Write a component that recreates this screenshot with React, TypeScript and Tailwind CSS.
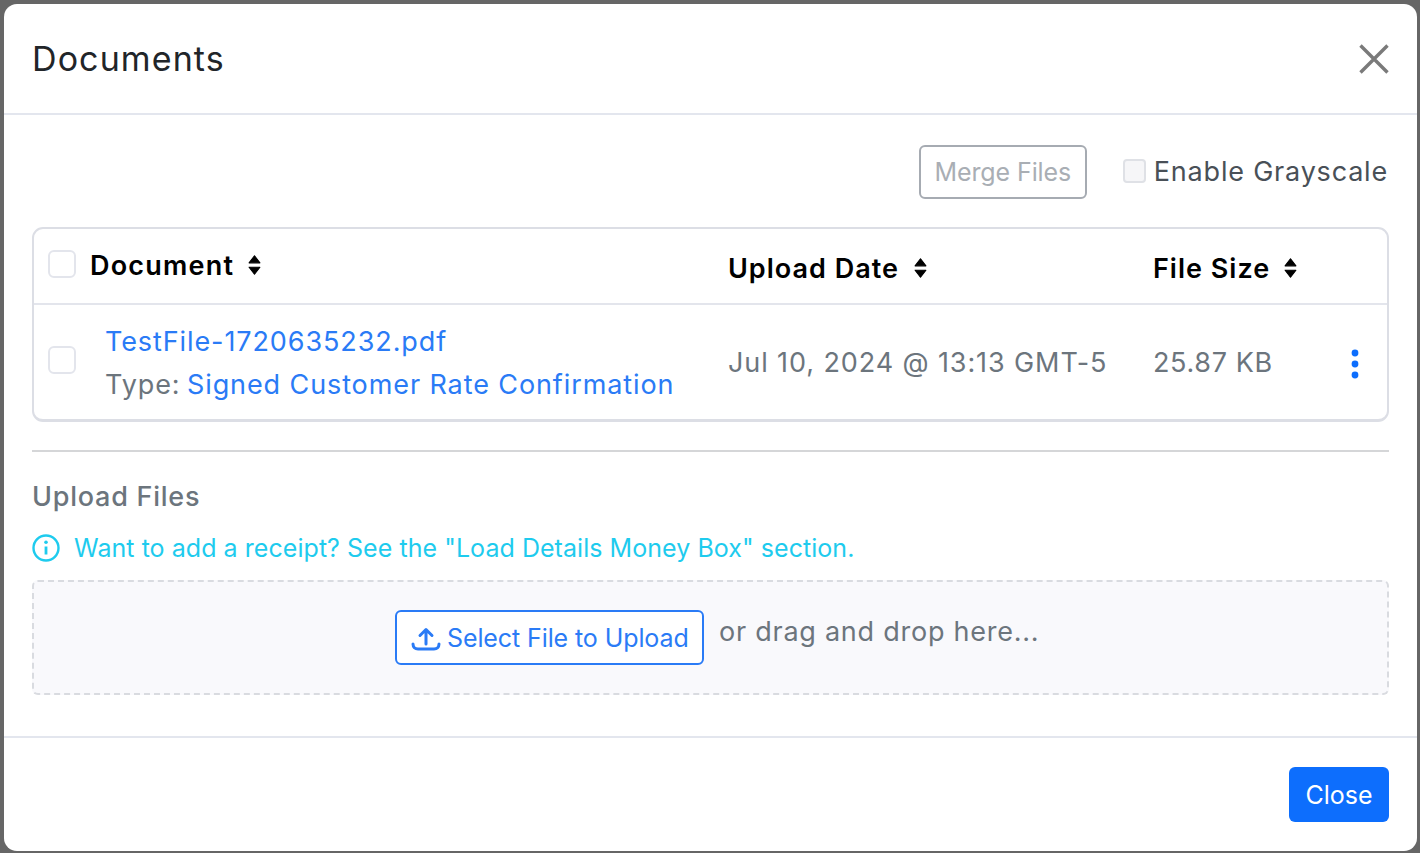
const SortIcon = () => (
  <svg viewBox="0 0 12 20" className="w-[13px] h-[22px] text-black">
    <path d="M6 1.5 11 8H1z" fill="currentColor" strokeLinejoin="round" stroke="currentColor" strokeWidth="1" />
    <path d="M6 18.5 1 12h10z" fill="currentColor" strokeLinejoin="round" stroke="currentColor" strokeWidth="1" />
  </svg>
)

const Checkbox = ({ className = '' }: { className?: string }) => (
  <span className={`block w-[28px] h-[28px] rounded-[6px] border-2 border-[#e3e5ec] bg-white shrink-0 ${className}`} />
)

export default function App() {
  return (
    <div
      className="w-[1420px] h-[853px] bg-[#666666] pt-[4px] pl-[4px] overflow-hidden"
      style={{ fontFamily: 'Inter, "Noto Sans", sans-serif' }}
    >
      <div className="w-[1413px] h-[847px] bg-white rounded-[13px] flex flex-col">
        <div className="h-[111px] shrink-0 border-b-2 border-[#e3e6ee] pl-[28px] pr-[28px] flex items-center justify-between">
          <h1 className="text-[34px] leading-none tracking-[1.1px] text-[#212529] mt-[0px]">Documents</h1>
          <svg viewBox="0 0 30 30" className="w-[30px] h-[30px] text-[#7a7a7a]">
            <path d="M1.5 1.5 28.5 28.5M28.5 1.5 1.5 28.5" stroke="currentColor" strokeWidth="3.4" fill="none" />
          </svg>
        </div>

        <div className="h-[623px] shrink-0 border-b-2 border-[#e3e6ee] pl-[28px] pr-[28px] pt-[30px]">
          <div className="flex items-center justify-end h-[54px] pr-[1px]">
            <button className="h-[54px] w-[168px] border-2 border-[#a6abb2] rounded-[6px] text-[25px] text-[#a9aeb4] bg-white tracking-[-0.1px] pt-[1px]">
              Merge Files
            </button>
            <span className="block w-[23px] h-[24px] ml-[36px] -mt-[3px] rounded-[4px] border-2 border-[#dfe1e6] bg-[#f6f6f8]" />
            <span className="ml-[8px] text-[27px] leading-none tracking-[0.8px] text-[#495057] -mt-[1px]">Enable Grayscale</span>
          </div>

          <div className="mt-[28px] h-[195px] rounded-[11px] border-2 border-[#dcdee5] border-b-[3px] flex flex-col">
            <div className="h-[76px] shrink-0 border-b-2 border-[#e3e5ec] flex items-center text-[27px] tracking-[1px] font-semibold text-black">
              <div className="w-[694px] pl-[14px] flex items-center -mt-[2px]">
                <Checkbox className="-mt-[3px]" />
                <span className="ml-[14px] leading-none tracking-[1.2px]">Document</span>
                <span className="ml-[14px] flex"><SortIcon /></span>
              </div>
              <div className="w-[425px] flex items-center mt-[4px]">
                <span className="leading-none">Upload Date</span>
                <span className="ml-[15px] flex"><SortIcon /></span>
              </div>
              <div className="flex items-center mt-[4px]">
                <span className="leading-none">File Size</span>
                <span className="ml-[14px] flex"><SortIcon /></span>
              </div>
            </div>

            <div className="flex-1 flex items-center text-[27px] tracking-[0.9px] text-[#6c757d]">
              <div className="w-[694px] pl-[14px] flex items-center">
                <Checkbox className="-mt-[5px]" />
                <div className="ml-[29px] mt-[1px] flex flex-col gap-[10px]">
                  <a className="leading-[33px] text-[#2a7bf6]">TestFile-1720635232.pdf</a>
                  <div className="leading-[33px]">
                    Type: <a className="text-[#2a7bf6] -ml-[2px]">Signed Customer Rate Confirmation</a>
                  </div>
                </div>
              </div>
              <div className="w-[425px] leading-none">Jul 10, 2024 @ 13:13 GMT-5</div>
              <div className="flex-1 flex items-center justify-between pr-[28px]">
                <span className="leading-none tracking-[0.65px]">25.87 KB</span>
                <svg viewBox="0 0 8 30" className="w-[8px] h-[30px] mt-[4px]">
                  <circle cx="4" cy="4" r="3.4" fill="#0d6efd" />
                  <circle cx="4" cy="15" r="3.4" fill="#0d6efd" />
                  <circle cx="4" cy="26" r="3.4" fill="#0d6efd" />
                </svg>
              </div>
            </div>
          </div>

          <hr className="mt-[28px] border-t-2 border-[#d5d6d8]" />

          <h2 className="mt-[29px] text-[27px] leading-[32px] tracking-[0.75px] font-medium text-[#6c757d]">Upload Files</h2>

          <div className="mt-[19px] flex items-center h-[32px] text-[25px] tracking-[0.05px] text-[#1ecbee]">
            <svg viewBox="0 0 28 28" className="w-[28px] h-[28px]" fill="none" stroke="currentColor">
              <circle cx="14" cy="14" r="12.5" strokeWidth="2.4" />
              <path d="M14 12.5v8" strokeWidth="2.8" />
              <circle cx="14" cy="8.2" r="1.8" fill="currentColor" stroke="none" />
            </svg>
            <span className="ml-[14px] leading-none">Want to add a receipt? See the "Load Details Money Box" section.</span>
          </div>

          <div className="mt-[16px] h-[115px] rounded-[6px] border-2 border-dashed border-[#d9dbe0] bg-[#f9f9fc] flex items-center pl-[361px]">
            <button className="h-[55px] w-[309px] rounded-[6px] border-2 border-[#2a7bf6] bg-white flex items-center pl-[14px] text-[25px] tracking-[-0.1px] text-[#2a7bf6]">
              <svg viewBox="0 0 30 24" className="w-[30px] h-[24px] mt-[3px]" fill="none" stroke="currentColor" strokeWidth="3" strokeLinecap="round" strokeLinejoin="round">
                <path d="M15 17V3M9 8.5 15 2.5 21 8.5" />
                <path d="M2 17c0 3 2 5 5 5h16c3 0 5-2 5-5" />
              </svg>
              <span className="ml-[6px] leading-none mt-[2px]">Select File to Upload</span>
            </button>
            <span className="ml-[15px] -mt-[12px] text-[27px] leading-none tracking-[0.75px] text-[#6c757d]">or drag and drop here...</span>
          </div>
        </div>

        <div className="flex-1 flex justify-end items-start pt-[29px] pr-[28px]">
          <button className="h-[55px] w-[100px] rounded-[6px] bg-[#0d6efd] text-white text-[25px] leading-none pt-[2px]">Close</button>
        </div>
      </div>
    </div>
  )
}
